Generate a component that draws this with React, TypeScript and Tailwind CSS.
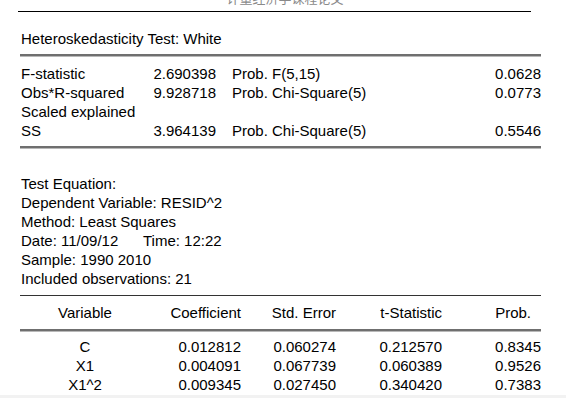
import React from "react";

const stats = [
  { label: "F-statistic", value: "2.690398", prob: "Prob. F(5,15)", p: "0.0628" },
  { label: "Obs*R-squared", value: "9.928718", prob: "Prob. Chi-Square(5)", p: "0.0773" },
  { label: "Scaled explained", value: "", prob: "", p: "" },
  { label: "SS", value: "3.964139", prob: "Prob. Chi-Square(5)", p: "0.5546" },
];

const rows = [
  ["C", "0.012812", "0.060274", "0.212570", "0.8345"],
  ["X1", "0.004091", "0.067739", "0.060389", "0.9526"],
  ["X1^2", "0.009345", "0.027450", "0.340420", "0.7383"],
];

function ThickRule({ className = "" }: { className?: string }) {
  return (
    <div className={"flex flex-col w-[521px] " + className}>
      <div className="h-[2px] bg-[#6f6f6f]" />
      <div className="h-px bg-[#b8b8b8]" />
    </div>
  );
}

export default function App() {
  return (
    <div className="w-[566px] h-[398px] bg-white overflow-hidden flex flex-col font-['Liberation_Sans',Arial,sans-serif] text-[15px] leading-[19px] text-black">
      <div className="h-[11px] overflow-hidden">
        <div className="-mt-[10px] text-center text-[13px] leading-[16px] text-[#8a8a8a] font-['Noto_Sans_CJK_SC',sans-serif] pl-[4px]">
          计量经济学课程论文
        </div>
      </div>
      <div className="ml-[18px] w-[513px] h-px bg-black" />

      <div className="ml-[20px] flex flex-col">
        <div className="mt-[17px] pl-[1px]">Heteroskedasticity Test: White</div>
        <ThickRule className="mt-[6px]" />
        <div className="mt-[7px] flex flex-col">
          {stats.map((s, i) => (
            <div key={i} className="flex w-[521px] h-[19px]">
              <div className="w-[130px] pl-[1px] whitespace-nowrap">{s.label}</div>
              <div className="w-[66px] text-right">{s.value}</div>
              <div className="ml-[16px] flex-1">{s.prob}</div>
              <div className="text-right">{s.p}</div>
            </div>
          ))}
        </div>
        <ThickRule className="mt-[6px]" />

        <div className="mt-[25px] pl-[1px] flex flex-col">
          <div>Test Equation:</div>
          <div>Dependent Variable: RESID^2</div>
          <div>Method: Least Squares</div>
          <div className="flex">
            <span className="w-[122px]">Date: 11/09/12</span>
            <span>Time: 12:22</span>
          </div>
          <div>Sample: 1990 2010</div>
          <div>Included observations: 21</div>
        </div>

        <div className="mt-[7px] w-[521px] h-px bg-[#333]" />
        <div className="mt-[7px] flex w-[521px] h-[19px]">
          <div className="w-[130px] text-center">Variable</div>
          <div className="w-[91px] text-right">Coefficient</div>
          <div className="w-[95px] text-right">Std. Error</div>
          <div className="w-[106px] text-right">t-Statistic</div>
          <div className="flex-1 text-right pr-[10px]">Prob.</div>
        </div>
        <ThickRule className="mt-[7px]" />
        <div className="mt-[5px] flex flex-col">
          {rows.map((r, i) => (
            <div key={i} className="flex w-[521px] h-[19px]">
              <div className="w-[130px] text-center">{r[0]}</div>
              <div className="w-[91px] text-right">{r[1]}</div>
              <div className="w-[95px] text-right">{r[2]}</div>
              <div className="w-[106px] text-right">{r[3]}</div>
              <div className="flex-1 text-right">{r[4]}</div>
            </div>
          ))}
        </div>
      </div>
      <div className="flex-1 mt-[1px] bg-[#f2f2f2]" />
    </div>
  );
}
